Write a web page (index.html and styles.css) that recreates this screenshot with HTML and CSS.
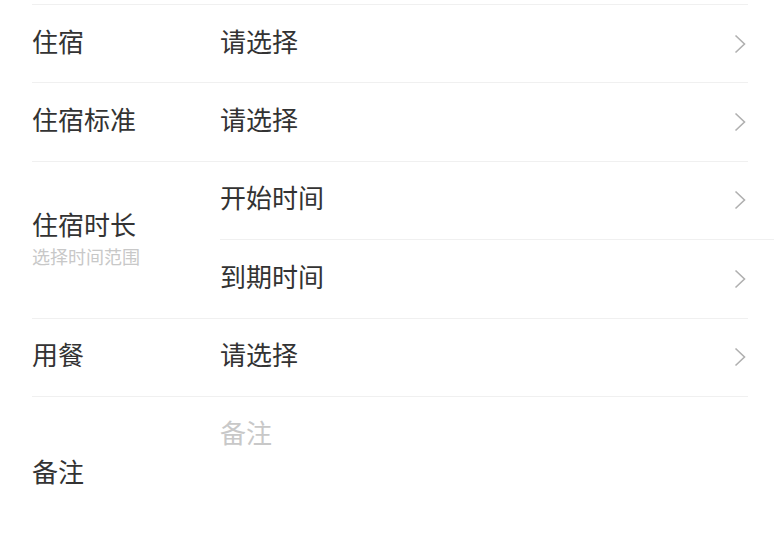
FILE: index.html
```html
<!DOCTYPE html>
<html lang="zh-CN">
<head>
<meta charset="utf-8">
<link rel="stylesheet" href="styles.css">
</head>
<body>
<div class="form">
  <div class="row">
    <div class="label">住宿</div>
    <div class="value">
      <div class="cell"><span class="text">请选择</span><svg class="arrow" viewBox="0 0 12 20"><polyline points="1.5,1.5 10.5,10 1.5,18.5"/></svg></div>
    </div>
  </div>
  <div class="row">
    <div class="label">住宿标准</div>
    <div class="value">
      <div class="cell"><span class="text">请选择</span><svg class="arrow" viewBox="0 0 12 20"><polyline points="1.5,1.5 10.5,10 1.5,18.5"/></svg></div>
    </div>
  </div>
  <div class="row row-double">
    <div class="label">
      <div>住宿时长</div>
      <div class="sub">选择时间范围</div>
    </div>
    <div class="value value-stack">
      <div class="cell cell-split"><span class="text">开始时间</span><svg class="arrow" viewBox="0 0 12 20"><polyline points="1.5,1.5 10.5,10 1.5,18.5"/></svg></div>
      <div class="cell"><span class="text">到期时间</span><svg class="arrow" viewBox="0 0 12 20"><polyline points="1.5,1.5 10.5,10 1.5,18.5"/></svg></div>
    </div>
  </div>
  <div class="row">
    <div class="label">用餐</div>
    <div class="value">
      <div class="cell"><span class="text">请选择</span><svg class="arrow" viewBox="0 0 12 20"><polyline points="1.5,1.5 10.5,10 1.5,18.5"/></svg></div>
    </div>
  </div>
  <div class="row row-remark">
    <div class="label">备注</div>
    <div class="remark"><span class="placeholder">备注</span></div>
  </div>
</div>
</body>
</html>
```

FILE: styles.css
```css
html, body {
  margin: 0;
  padding: 0;
  background: #ffffff;
}
body {
  font-family: "Microsoft YaHei", "Noto Sans CJK SC", "Noto Sans", sans-serif;
  color: #333333;
  font-size: 26px;
  overflow: hidden;
  width: 776px;
  height: 548px;
}
.form {
  padding: 4px 28px 0 32px;
}
.row {
  display: flex;
  align-items: center;
  border-top: 1px solid #f0f0f0;
  height: 78.4px;
  box-sizing: border-box;
}
.row > .label {
  padding-bottom: 6px;
}
.row-double {
  height: 156.8px;
}
.row-remark {
  height: 156px;
}
.label {
  width: 188px;
  flex: none;
  line-height: 32px;
}
.row-double > .label {
  padding-top: 0;
  padding-bottom: 0;
}
.sub {
  font-size: 18px;
  line-height: 32px;
  color: #c8c8c8;
}
.value {
  flex: 1;
  align-self: stretch;
  display: flex;
  flex-direction: column;
}
.value-stack {
  margin-right: -26px;
}
.cell {
  flex: 1;
  display: flex;
  align-items: center;
  justify-content: space-between;
  padding-right: 2px;
}
.cell .text {
  padding-bottom: 6px;
}
.value-stack .cell {
  padding-right: 28px;
}
.cell-split {
  border-bottom: 1px solid #f0f0f0;
}
.text {
  line-height: 32px;
}
.arrow {
  width: 12px;
  height: 20px;
  fill: none;
  stroke: #b0b0b0;
  stroke-width: 1.6;
}
.remark {
  flex: 1;
  align-self: flex-start;
  padding-top: 16px;
  height: 110px;
}
.placeholder {
  color: #c8c8c8;
  line-height: 32px;
}
```
